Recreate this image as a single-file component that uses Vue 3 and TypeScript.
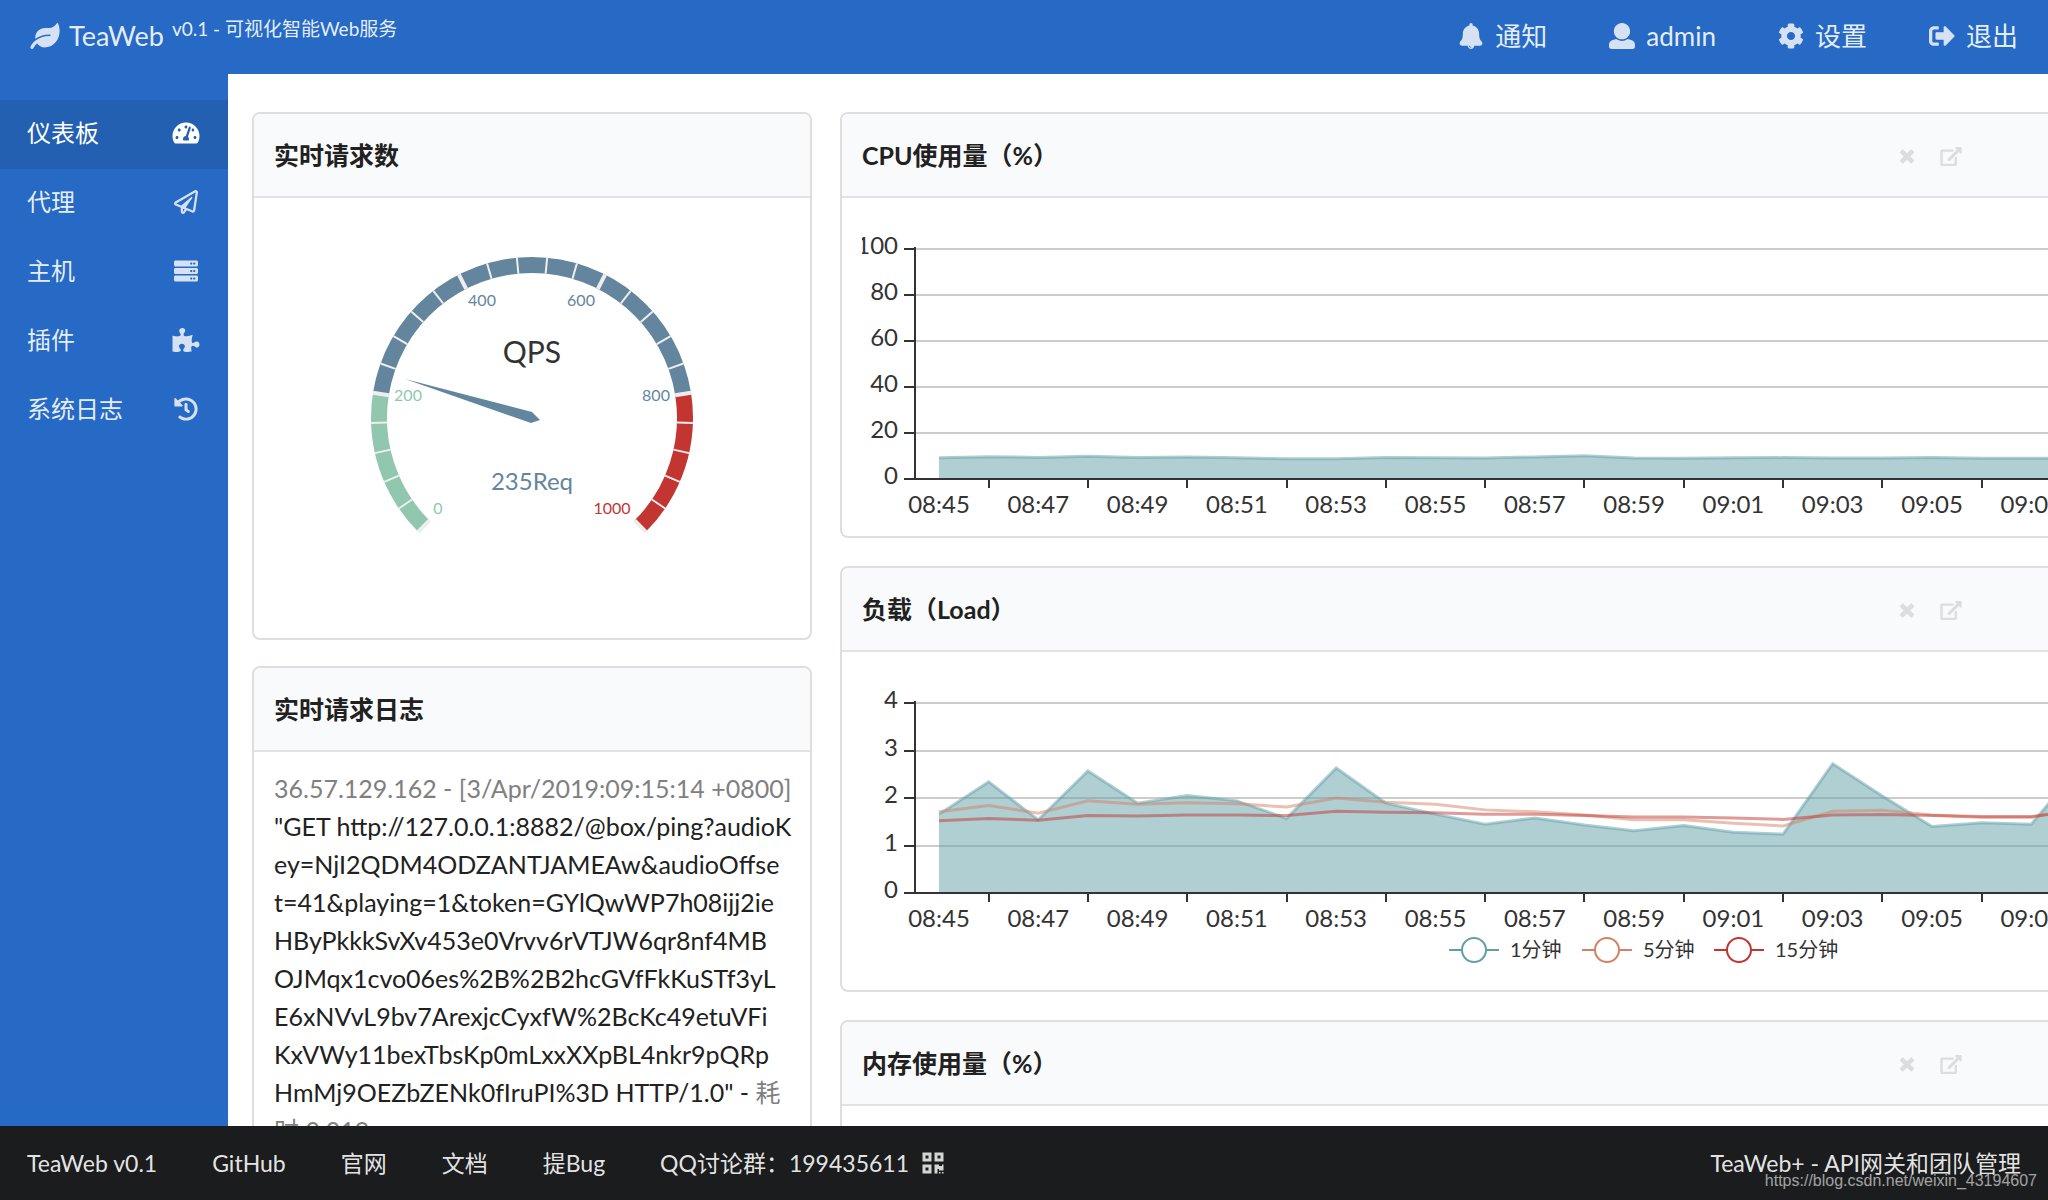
<script setup lang="ts">
interface Icon {
  w: number
  d: string
}

const icons: Record<string, Icon> = {
  leaf: { w: 576, d: 'M546.2 9.7c-5.6-12.5-21.6-13-28.3-1.2C486.9 62.4 431.4 96 368 96h-80C182 96 96 182 96 288c0 7 .8 13.7 1.5 20.5C161.3 262.8 253.4 224 384 224c8.8 0 16 7.2 16 16s-7.2 16-16 16C132.6 256 26 410.1 2.4 468c-6.6 16.3 1.2 34.9 17.5 41.6 16.4 6.8 35-1.1 41.8-17.3 1.5-3.6 20.9-47.9 71.9-90.6 32.4 43.9 94 85.8 174.9 77.2C465.5 467.5 576 326.7 576 154.3c0-50.2-10.8-102.2-29.8-144.6z' },
  dashboard: { w: 576, d: 'M288 32C128.94 32 0 160.94 0 320c0 52.8 14.25 102.26 39.06 144.8 5.61 9.62 16.3 15.2 27.44 15.2h443c11.14 0 21.83-5.58 27.44-15.2C561.75 422.26 576 372.8 576 320c0-159.06-128.94-288-288-288zm0 64c14.71 0 26.58 10.13 30.32 23.65-1.11 2.26-2.64 4.23-3.45 6.67l-9.22 27.67c-5.13 3.49-10.97 6.01-17.64 6.01-17.67 0-32-14.33-32-32S270.33 96 288 96zM96 384c-17.67 0-32-14.33-32-32s14.33-32 32-32 32 14.33 32 32-14.33 32-32 32zm48-160c-17.67 0-32-14.33-32-32s14.33-32 32-32 32 14.33 32 32-14.33 32-32 32zm246.77-72.41l-61.33 184C343.13 347.33 352 364.54 352 384c0 11.72-3.38 22.55-8.88 32H232.88c-5.5-9.45-8.88-20.28-8.88-32 0-33.94 26.5-61.43 59.9-63.59l61.34-184.01c4.17-12.56 17.73-19.45 30.36-15.17 12.57 4.19 19.35 17.79 15.17 30.36zm14.66 57.2l15.52-46.55c3.47-1.29 7.13-2.23 11.05-2.23 17.67 0 32 14.33 32 32s-14.33 32-32 32c-11.38-.01-20.89-6.28-26.57-15.22zM480 384c-17.67 0-32-14.33-32-32s14.33-32 32-32 32 14.33 32 32-14.33 32-32 32z' },
  plane: { w: 512, d: 'M440 6.5L24 246.4c-34.4 19.9-31.1 70.8 5.7 85.9L144 379.6V464c0 46.4 59.2 65.5 86.6 28.6l43.8-59.1 111.9 46.2c5.9 2.4 12.1 3.6 18.3 3.6 8.2 0 16.3-2.1 23.6-6.2 12.8-7.2 21.6-20 23.9-34.5l59.4-387.2c6.1-40.1-36.9-68.8-71.5-48.9zM192 464v-64.6l36.6 15.1L192 464zm212.6-28.7l-153.8-63.5L391 169.5c10.7-15.5-9.5-33.5-23.7-21.2L155.8 332.6 48 288 464 48l-59.4 387.3z' },
  server: { w: 512, d: 'M480 160H32c-17.673 0-32-14.327-32-32V64c0-17.673 14.327-32 32-32h448c17.673 0 32 14.327 32 32v64c0 17.673-14.327 32-32 32zm-48-88c-13.255 0-24 10.745-24 24s10.745 24 24 24 24-10.745 24-24-10.745-24-24-24zm-64 0c-13.255 0-24 10.745-24 24s10.745 24 24 24 24-10.745 24-24-10.745-24-24-24zm112 248H32c-17.673 0-32-14.327-32-32v-64c0-17.673 14.327-32 32-32h448c17.673 0 32 14.327 32 32v64c0 17.673-14.327 32-32 32zm-48-88c-13.255 0-24 10.745-24 24s10.745 24 24 24 24-10.745 24-24-10.745-24-24-24zm-64 0c-13.255 0-24 10.745-24 24s10.745 24 24 24 24-10.745 24-24-10.745-24-24-24zm112 248H32c-17.673 0-32-14.327-32-32v-64c0-17.673 14.327-32 32-32h448c17.673 0 32 14.327 32 32v64c0 17.673-14.327 32-32 32zm-48-88c-13.255 0-24 10.745-24 24s10.745 24 24 24 24-10.745 24-24-10.745-24-24-24zm-64 0c-13.255 0-24 10.745-24 24s10.745 24 24 24 24-10.745 24-24-10.745-24-24-24z' },
  puzzle: { w: 576, d: 'M519.442 288.651c-41.519 0-59.5 31.593-82.058 31.593C377.409 320.244 432 144 432 144s-196.288 80-196.288-3.297c0-35.827 36.288-46.25 36.288-85.985C272 19.216 243.885 0 210.539 0c-34.654 0-66.366 18.891-66.366 56.346 0 41.364 31.711 59.277 31.711 81.75C175.885 207.719 0 166.758 0 166.758v333.237s178.635 41.047 178.635-28.662c0-22.473-40-40.107-40-81.471 0-37.456 29.25-56.346 63.577-56.346 33.673 0 61.788 19.216 61.788 54.717 0 39.735-36.288 50.158-36.288 85.985 0 60.803 129.675 25.73 181.23 25.73 0 0-34.725-120.101 25.827-120.101 35.962 0 46.423 36.152 86.308 36.152C556.712 416 576 387.99 576 354.443c0-34.199-18.962-65.792-56.558-65.792z' },
  history: { w: 512, d: 'M504 255.531c.253 136.64-111.18 248.372-247.82 248.468-59.015.042-113.223-20.53-155.822-54.911-11.077-8.94-11.905-25.541-1.839-35.607l11.267-11.267c8.609-8.609 22.353-9.551 31.891-1.984C173.062 425.135 212.781 440 256 440c101.705 0 184-82.311 184-184 0-101.705-82.311-184-184-184-48.814 0-93.149 18.969-126.068 49.932l50.754 50.754c10.08 10.08 2.941 27.314-11.313 27.314H24c-8.837 0-16-7.163-16-16V38.627c0-14.254 17.234-21.393 27.314-11.314l49.372 49.372C129.209 34.136 189.552 8 256 8c136.81 0 247.747 110.78 248 247.531zm-180.912 78.784l9.823-12.63c8.138-10.463 6.253-25.542-4.21-33.679L288 256.349V152c0-13.255-10.745-24-24-24h-16c-13.255 0-24 10.745-24 24v135.651l65.409 50.874c10.463 8.137 25.541 6.253 33.679-4.21z' },
  bell: { w: 448, d: 'M433.884 366.059C411.634 343.809 384 316.118 384 208c0-79.394-57.831-145.269-133.663-157.83A31.845 31.845 0 0 0 256 32c0-17.673-14.327-32-32-32s-32 14.327-32 32c0 6.75 2.095 13.008 5.663 18.17C121.831 62.731 64 128.606 64 208c0 108.118-27.643 135.809-49.893 158.059C-16.042 396.208 5.325 448 48.048 448H160c0 35.346 28.654 64 64 64s64-28.654 64-64h111.943c42.638 0 64.151-51.731 33.941-81.941zM224 472a8 8 0 0 1 0 16c-22.056 0-40-17.944-40-40h16c0 13.234 10.766 24 24 24z' },
  user: { w: 512, d: 'M256 0c88.366 0 160 71.634 160 160s-71.634 160-160 160S96 248.366 96 160 167.634 0 256 0zm183.283 333.821l-71.313-17.828c-74.923 53.89-165.738 41.864-223.94 0l-71.313 17.828C29.981 344.505 0 382.903 0 426.955V464c0 26.51 21.49 48 48 48h416c26.51 0 48-21.49 48-48v-37.045c0-44.052-29.981-82.45-72.717-93.134z' },
  cog: { w: 512, d: 'M444.788 291.1l42.616 24.599c4.867 2.809 7.126 8.618 5.459 13.985-11.07 35.642-29.97 67.842-54.689 94.586a12.016 12.016 0 0 1-14.832 2.254l-42.584-24.595a191.577 191.577 0 0 1-60.759 35.13v49.182a12.01 12.01 0 0 1-9.377 11.718c-34.956 7.85-72.499 8.256-109.219.007-5.49-1.233-9.403-6.096-9.403-11.723v-49.184a191.555 191.555 0 0 1-60.759-35.13l-42.584 24.595a12.016 12.016 0 0 1-14.832-2.254c-24.718-26.744-43.619-58.944-54.689-94.586-1.667-5.366.592-11.175 5.459-13.985L67.212 291.1a193.48 193.48 0 0 1 0-70.199l-42.616-24.599c-4.867-2.809-7.126-8.618-5.459-13.985 11.07-35.642 29.97-67.842 54.689-94.586a12.016 12.016 0 0 1 14.832-2.254l42.584 24.595a191.577 191.577 0 0 1 60.759-35.13V25.759a12.01 12.01 0 0 1 9.377-11.718c34.956-7.85 72.499-8.256 109.219-.007 5.49 1.233 9.403 6.096 9.403 11.723v49.184a191.555 191.555 0 0 1 60.759 35.13l42.584-24.595a12.016 12.016 0 0 1 14.832 2.254c24.718 26.744 43.619 58.944 54.689 94.586 1.667 5.366-.592 11.175-5.459 13.985L444.788 220.9a193.485 193.485 0 0 1 0 70.2zM336 256c0-44.112-35.888-80-80-80s-80 35.888-80 80 35.888 80 80 80 80-35.888 80-80z' },
  signout: { w: 512, d: 'M497 273L329 441c-15 15-41 4.5-41-17v-96H152c-13.3 0-24-10.7-24-24v-96c0-13.3 10.7-24 24-24h136V88c0-21.4 25.9-32 41-17l168 168c9.3 9.4 9.3 24.6 0 34zM192 436v-40c0-6.6-5.4-12-12-12H96c-17.7 0-32-14.3-32-32V160c0-17.7 14.3-32 32-32h84c6.6 0 12-5.4 12-12V76c0-6.6-5.4-12-12-12H96c-53 0-96 43-96 96v192c0 53 43 96 96 96h84c6.6 0 12-5.4 12-12z' },
  times: { w: 384, d: 'M323.1 441l53.9-53.9c9.4-9.4 9.4-24.5 0-33.9L279.8 256l97.2-97.2c9.4-9.4 9.4-24.5 0-33.9L323.1 71c-9.4-9.4-24.5-9.4-33.9 0L192 168.2 94.8 71c-9.4-9.4-24.5-9.4-33.9 0L7 124.9c-9.4 9.4-9.4 24.5 0 33.9l97.2 97.2L7 353.2c-9.4 9.4-9.4 24.5 0 33.9L60.9 441c9.4 9.4 24.5 9.4 33.9 0l97.2-97.2 97.2 97.2c9.3 9.3 24.5 9.3 33.9 0z' },
  external: { w: 576, d: 'M576 24v127.984c0 21.461-25.96 31.98-40.971 16.971l-35.707-35.709-243.523 243.523c-9.373 9.373-24.568 9.373-33.941 0l-22.627-22.627c-9.373-9.373-9.373-24.569 0-33.941L442.756 76.676l-35.703-35.705C391.982 25.9 402.656 0 424.024 0H552c13.255 0 24 10.745 24 24zM407.029 270.794l-16 16A23.999 23.999 0 0 0 384 303.765V448H64V128h264a24.003 24.003 0 0 0 16.97-7.029l16-16C376.089 89.851 365.381 64 344 64H48C21.49 64 0 85.49 0 112v352c0 26.51 21.49 48 48 48h352c26.51 0 48-21.49 48-48V287.764c0-21.382-25.852-32.09-40.971-16.97z' },
  qrcode: { w: 448, d: 'M0 224h192V32H0v192zM64 96h64v64H64V96zm192-64v192h192V32H256zm128 128h-64V96h64v64zM0 480h192V288H0v192zm64-128h64v64H64v-64zm352-64h32v128h-96v-32h-32v96h-64V288h96v32h64v-32zm0 160h32v32h-32v-32zm-64 0h32v32h-32v-32z' },
}

const topLinks = [
  { icon: 'bell', text: '通知' },
  { icon: 'user', text: 'admin' },
  { icon: 'cog', text: '设置' },
  { icon: 'signout', text: '退出' },
]

const menu = [
  { icon: 'dashboard', text: '仪表板', active: true },
  { icon: 'plane', text: '代理', active: false },
  { icon: 'server', text: '主机', active: false },
  { icon: 'puzzle', text: '插件', active: false },
  { icon: 'history', text: '系统日志', active: false },
]

const footLinks = ['TeaWeb v0.1', 'GitHub', '官网', '文档', '提Bug']

/* Request line of the latest log entry, folded for the narrow column */
const request = [
  '"GET http://127.0.0.1:8882/@box/ping?audioK',
  'ey=NjI2QDM4ODZANTJAMEAw&audioOffse',
  't=41&playing=1&token=GYlQwWP7h08ijj2ie',
  'HByPkkkSvXv453e0Vrvv6rVTJW6qr8nf4MB',
  'OJMqx1cvo06es%2B%2B2hcGVfFkKuSTf3yL',
  'E6xNVvL9bv7ArexjcCyxfW%2BcKc49etuVFi',
  'KxVWy11bexTbsKp0mLxxXXpBL4nkr9pQRp',
  'HmMj9OEZbZENk0fIruPI%3D HTTP/1.0" - ',
].join('\n')

/* Gauge */
const gauge = { cx: 256, cy: 220, outer: 161, inner: 145, max: 1000 }

function polar(value: number, r: number): [number, number] {
  const a = ((225 - (value / gauge.max) * 270) * Math.PI) / 180
  return [gauge.cx + r * Math.cos(a), gauge.cy - r * Math.sin(a)]
}

function arc(from: number, to: number): string {
  const large = to - from > 667 ? 1 : 0
  const [x1, y1] = polar(from, gauge.outer)
  const [x2, y2] = polar(to, gauge.outer)
  const [x3, y3] = polar(to, gauge.inner)
  const [x4, y4] = polar(from, gauge.inner)
  return `M${x1} ${y1}A${gauge.outer} ${gauge.outer} 0 ${large} 1 ${x2} ${y2}L${x3} ${y3}A${gauge.inner} ${gauge.inner} 0 ${large} 0 ${x4} ${y4}Z`
}

const bands = [
  { d: arc(0, 200), color: '#91c7ae' },
  { d: arc(200, 800), color: '#63869e' },
  { d: arc(800, 1000), color: '#c23531' },
]

const gaugeTicks = Array.from({ length: 26 }, (_, i) => {
  const [x1, y1] = polar(i * 40, gauge.outer)
  const [x2, y2] = polar(i * 40, gauge.inner)
  return { x1, y1, x2, y2, major: i % 5 === 0 }
})

const gaugeLabels = [
  { text: '0', x: 162, y: 316, color: '#91c7ae' },
  { text: '200', x: 132, y: 203, color: '#91c7ae' },
  { text: '400', x: 206, y: 108, color: '#63869e' },
  { text: '600', x: 305, y: 108, color: '#63869e' },
  { text: '800', x: 380, y: 203, color: '#63869e' },
  { text: '1000', x: 336, y: 316, color: '#c23531' },
]

/* Line charts: one point per minute */
const axisX = 53
const firstX = 77
const step = 99.3 / 2
const top = 51
const base = 281

interface Series {
  color: string
  area: boolean
  values: number[]
}

interface Chart {
  title: string
  max: number
  ticks: number[]
  height: number
  base: number
  series: Series[]
  legend: { text: string; color: string; x: number }[]
}

const times = Array.from({ length: 12 }, (_, i) => {
  const m = 45 + i * 2
  return `${m < 60 ? '08' : '09'}:${String(m % 60).padStart(2, '0')}`
})

const charts: Chart[] = [
  {
    title: 'CPU使用量（%）',
    max: 100,
    ticks: [0, 20, 40, 60, 80, 100],
    height: 338,
    base,
    series: [
      {
        color: '#61a0a8',
        area: true,
        values: [9.2, 9.7, 9.4, 9.9, 9.3, 9.6, 9.2, 8.8, 8.8, 9.3, 9.2, 9.1, 9.6, 10.1, 9.1, 9, 9.2, 9.3, 9.1, 9.1, 9.3, 9, 9, 9.1],
      },
    ],
    legend: [],
  },
  {
    title: '负载（Load）',
    max: 4,
    ticks: [0, 1, 2, 3, 4],
    height: 338,
    base: base - 40,
    series: [
      {
        color: '#61a0a8',
        area: true,
        values: [1.66, 2.34, 1.54, 2.57, 1.89, 2.05, 1.94, 1.57, 2.63, 1.89, 1.66, 1.45, 1.58, 1.43, 1.31, 1.42, 1.28, 1.24, 2.72, 2.04, 1.4, 1.48, 1.45, 2.69],
      },
      {
        color: '#d48265',
        area: false,
        values: [1.71, 1.84, 1.68, 1.94, 1.87, 1.9, 1.88, 1.81, 2, 1.91, 1.87, 1.75, 1.71, 1.64, 1.54, 1.54, 1.47, 1.41, 1.72, 1.74, 1.64, 1.59, 1.59, 1.8],
      },
      {
        color: '#c23531',
        area: false,
        values: [1.52, 1.57, 1.53, 1.63, 1.62, 1.64, 1.64, 1.63, 1.72, 1.7, 1.69, 1.66, 1.66, 1.63, 1.6, 1.6, 1.58, 1.55, 1.64, 1.65, 1.63, 1.61, 1.61, 1.74],
      },
    ],
    legend: [
      { text: '1分钟', color: '#61a0a8', x: 587 },
      { text: '5分钟', color: '#d48265', x: 720 },
      { text: '15分钟', color: '#c23531', x: 852 },
    ],
  },
  { title: '内存使用量（%）', max: 100, ticks: [], height: 338, base, series: [], legend: [] },
]

function yOf(c: Chart, v: number): number {
  return c.base - (v / c.max) * (c.base - top)
}

function line(c: Chart, s: Series): string {
  return s.values.map((v, i) => `${firstX + i * step},${yOf(c, v)}`).join(' ')
}

function area(c: Chart, s: Series): string {
  const end = firstX + (s.values.length - 1) * step
  return `${firstX},${c.base} ${line(c, s)} ${end},${c.base}`
}
</script>

<template>
  <div class="page">
    <header class="topbar">
      <a class="brand" href="#">
        <svg class="ico big" :viewBox="`0 0 ${icons.leaf.w} 512`"><path :d="icons.leaf.d" /></svg>
        <span class="name">TeaWeb</span>
        <span class="slogan">v0.1 - 可视化智能Web服务</span>
      </a>
      <nav class="toplinks">
        <a v-for="l in topLinks" :key="l.text" href="#">
          <svg class="ico big" :viewBox="`0 0 ${icons[l.icon].w} 512`"><path :d="icons[l.icon].d" /></svg>
          <span>{{ l.text }}</span>
        </a>
      </nav>
    </header>

    <div class="middle">
      <nav class="sidebar">
        <a v-for="m in menu" :key="m.text" href="#" :class="{ active: m.active }">
          <span>{{ m.text }}</span>
          <svg class="ico" :viewBox="`0 0 ${icons[m.icon].w} 512`"><path :d="icons[m.icon].d" /></svg>
        </a>
      </nav>

      <main class="content">
        <div class="board">
          <div class="column left">
            <section class="card">
              <h2 class="head">实时请求数</h2>
              <div class="gauge-body">
                <svg class="gauge" viewBox="0 0 512 440" role="img" aria-label="QPS">
                  <path v-for="b in bands" :key="b.color" :d="b.d" :fill="b.color" />
                  <line
                    v-for="(t, i) in gaugeTicks"
                    :key="i"
                    :x1="t.x1"
                    :y1="t.y1"
                    :x2="t.x2"
                    :y2="t.y2"
                    :class="t.major ? 'major' : 'minor'"
                  />
                  <text v-for="l in gaugeLabels" :key="l.text" class="g-label" :x="l.x" :y="l.y" :fill="l.color">{{ l.text }}</text>
                  <path d="M129 181L256 214L264 222L255 225Z" fill="#63869e" />
                  <text class="g-title" x="256" y="165">QPS</text>
                  <text class="g-value" x="256" y="292">235Req</text>
                </svg>
              </div>
            </section>

            <section class="card">
              <h2 class="head">实时请求日志</h2>
              <div class="log">
                <div class="muted">36.57.129.162 - [3/Apr/2019:09:15:14 +0800]</div>
                <div class="request">{{ request }}<span class="muted">耗{{ '\n' }}时 0.019s</span></div>
              </div>
            </section>
          </div>

          <div class="column right">
            <section v-for="c in charts" :key="c.title" class="card">
              <div class="head">
                <h2>{{ c.title }}</h2>
                <div class="tools">
                  <button type="button" aria-label="关闭">
                    <svg class="ico small" :viewBox="`0 0 ${icons.times.w} 512`"><path :d="icons.times.d" /></svg>
                  </button>
                  <button type="button" aria-label="打开">
                    <svg class="ico small" :viewBox="`0 0 ${icons.external.w} 512`"><path :d="icons.external.d" /></svg>
                  </button>
                </div>
              </div>
              <div class="chart-body">
                <svg class="chart" :height="c.height">
                  <template v-if="c.series.length">
                    <line v-for="t in c.ticks.slice(1)" :key="'g' + t" class="grid" :x1="axisX" x2="100%" :y1="Math.round(yOf(c, t))" :y2="Math.round(yOf(c, t))" />
                    <g v-for="s in c.series" :key="s.color">
                      <polygon v-if="s.area" :points="area(c, s)" :fill="s.color" fill-opacity="0.5" />
                      <polyline class="trend" :points="line(c, s)" :stroke="s.color" />
                    </g>
                    <line class="axis" :x1="axisX" :x2="axisX" :y1="top - 2" :y2="c.base" />
                    <line class="axis" :x1="axisX" x2="100%" :y1="c.base" :y2="c.base" />
                    <g v-for="t in c.ticks" :key="'y' + t">
                      <line class="axis" :x1="axisX - 11" :x2="axisX" :y1="Math.round(yOf(c, t))" :y2="Math.round(yOf(c, t))" />
                      <text class="y-label" :x="axisX - 17" :y="Math.round(yOf(c, t)) + 5">{{ t }}</text>
                    </g>
                    <g v-for="(t, i) in times" :key="t">
                      <line class="axis" :x1="Math.round(firstX + (i * 2 + 1) * step)" :x2="Math.round(firstX + (i * 2 + 1) * step)" :y1="c.base" :y2="c.base + 9" />
                      <text class="x-label" :x="firstX + i * 2 * step" :y="c.base + 34">{{ t }}</text>
                    </g>
                    <g v-for="l in c.legend" :key="l.text">
                      <line class="mark" :x1="l.x" :x2="l.x + 50" :y1="c.base + 57" :y2="c.base + 57" :stroke="l.color" />
                      <circle class="mark" :cx="l.x + 25" :cy="c.base + 57" r="12" fill="#fff" :stroke="l.color" />
                      <text class="legend" :x="l.x + 61" :y="c.base + 64">{{ l.text }}</text>
                    </g>
                  </template>
                </svg>
              </div>
            </section>
          </div>
        </div>
      </main>
    </div>

    <footer class="footer">
      <nav>
        <a v-for="f in footLinks" :key="f" href="#">{{ f }}</a>
        <a class="qq" href="#">
          <span>QQ讨论群：199435611</span>
          <svg class="ico" :viewBox="`0 0 ${icons.qrcode.w} 512`"><path :d="icons.qrcode.d" /></svg>
        </a>
      </nav>
      <a href="#">TeaWeb+ - API网关和团队管理</a>
      <span class="watermark">https://blog.csdn.net/weixin_43194607</span>
    </footer>
  </div>
</template>

<style>
body {
  margin: 0;
  overflow: hidden;
}
</style>

<style scoped>
.page {
  display: flex;
  flex-direction: column;
  height: 100vh;
  overflow: hidden;
  background: #fff;
  color: #212121;
  font-family: Lato, "Noto Sans CJK SC", sans-serif;
  font-size: 24px;
  line-height: 34px;
}

a {
  color: inherit;
  text-decoration: none;
}

h2 {
  margin: 0;
  font-size: 25px;
  font-weight: 700;
}

.ico {
  width: 28px;
  height: 24px;
  fill: currentColor;
  opacity: 0.9;
}

.ico.big {
  width: 30px;
  height: 26px;
}

.ico.small {
  display: block;
  width: 22px;
  height: 19px;
  opacity: 1;
}

.topbar {
  display: flex;
  flex: none;
  align-items: center;
  justify-content: space-between;
  height: 72px;
  padding: 0 30px 2px;
  background: #276ac6;
  color: rgba(255, 255, 255, 0.9);
  font-size: 26px;
}

.brand,
.toplinks,
.toplinks a {
  display: flex;
  align-items: center;
}

.name {
  margin: 0 8px 0 9px;
  font-size: 27px;
}

.slogan {
  padding-bottom: 14px;
  font-size: 19px;
}

.toplinks {
  gap: 60px;
}

.toplinks a {
  gap: 9px;
}

.middle {
  display: flex;
  flex: 1;
  min-height: 0;
}

.sidebar {
  flex: none;
  width: 228px;
  padding-top: 26px;
  box-sizing: border-box;
  background: #276ac6;
  color: rgba(255, 255, 255, 0.9);
}

.sidebar a {
  display: flex;
  align-items: center;
  justify-content: space-between;
  height: 66px;
  padding: 0 28px 3px 27px;
}

.sidebar a.active {
  background: #2360b2;
  color: #fff;
}

.sidebar a.active .ico {
  opacity: 1;
}

.content {
  flex: 1;
  min-width: 0;
  padding: 38px 0 0 24px;
  overflow: hidden;
}

.board {
  display: grid;
  grid-template-columns: 4fr 9fr;
  gap: 28px;
  margin-right: -52px;
}

.column {
  display: flex;
  flex-direction: column;
  gap: 28px;
  min-width: 0;
}

.column.left {
  gap: 26px;
}

.card {
  border: 2px solid #dededf;
  border-radius: 8px;
  overflow: hidden;
  background: #fff;
}

.head {
  display: flex;
  align-items: center;
  justify-content: space-between;
  height: 82px;
  padding: 0 20px;
  border-bottom: 2px solid #e1e2e3;
  background: #f9fafb;
}

.right .head {
  padding-right: 136px;
}

.tools {
  display: flex;
  gap: 22px;
  padding-top: 2px;
}

.tools button {
  padding: 0;
  border: 0;
  background: none;
  color: #dcdddd;
  cursor: pointer;
}

.gauge-body {
  display: flex;
  justify-content: center;
}

.gauge {
  width: 512px;
  height: 440px;
}

.gauge text {
  text-anchor: middle;
}

.major {
  stroke: #eee;
  stroke-width: 4;
}

.minor {
  stroke: #eee;
  stroke-width: 2;
}

.g-label {
  font-size: 16px;
}

.g-title {
  fill: #333;
  font-size: 30px;
}

.g-value {
  fill: #63869e;
  font-size: 24px;
}

.log {
  padding: 17px 16px 17px 20px;
  font-size: 25px;
  line-height: 38px;
}

.request {
  white-space: pre-wrap;
  word-break: break-all;
}

.muted {
  color: #808080;
}

.chart-body {
  padding: 0 20px;
}

.chart {
  display: block;
  width: 100%;
}

.grid {
  stroke: #ccc;
  stroke-width: 2;
}

.axis {
  stroke: #333;
  stroke-width: 2;
}

.trend {
  fill: none;
  stroke-width: 3;
  stroke-opacity: 0.5;
}

.mark {
  stroke-width: 2;
}

.y-label,
.x-label,
.legend {
  fill: #333;
}

.y-label {
  text-anchor: end;
}

.x-label {
  text-anchor: middle;
}

.legend {
  font-size: 20px;
}

.footer {
  position: relative;
  display: flex;
  flex: none;
  align-items: center;
  justify-content: space-between;
  height: 74px;
  padding: 0 27px;
  background: #1b1c1d;
  color: rgba(255, 255, 255, 0.9);
  font-size: 23px;
}

.footer nav {
  display: flex;
  gap: 55px;
}

.qq {
  display: flex;
  align-items: center;
  gap: 10px;
}

.watermark {
  position: absolute;
  right: 11px;
  bottom: 9px;
  color: rgba(255, 255, 255, 0.6);
  font-family: "Liberation Sans", sans-serif;
  font-size: 16px;
  line-height: 20px;
}
</style>
